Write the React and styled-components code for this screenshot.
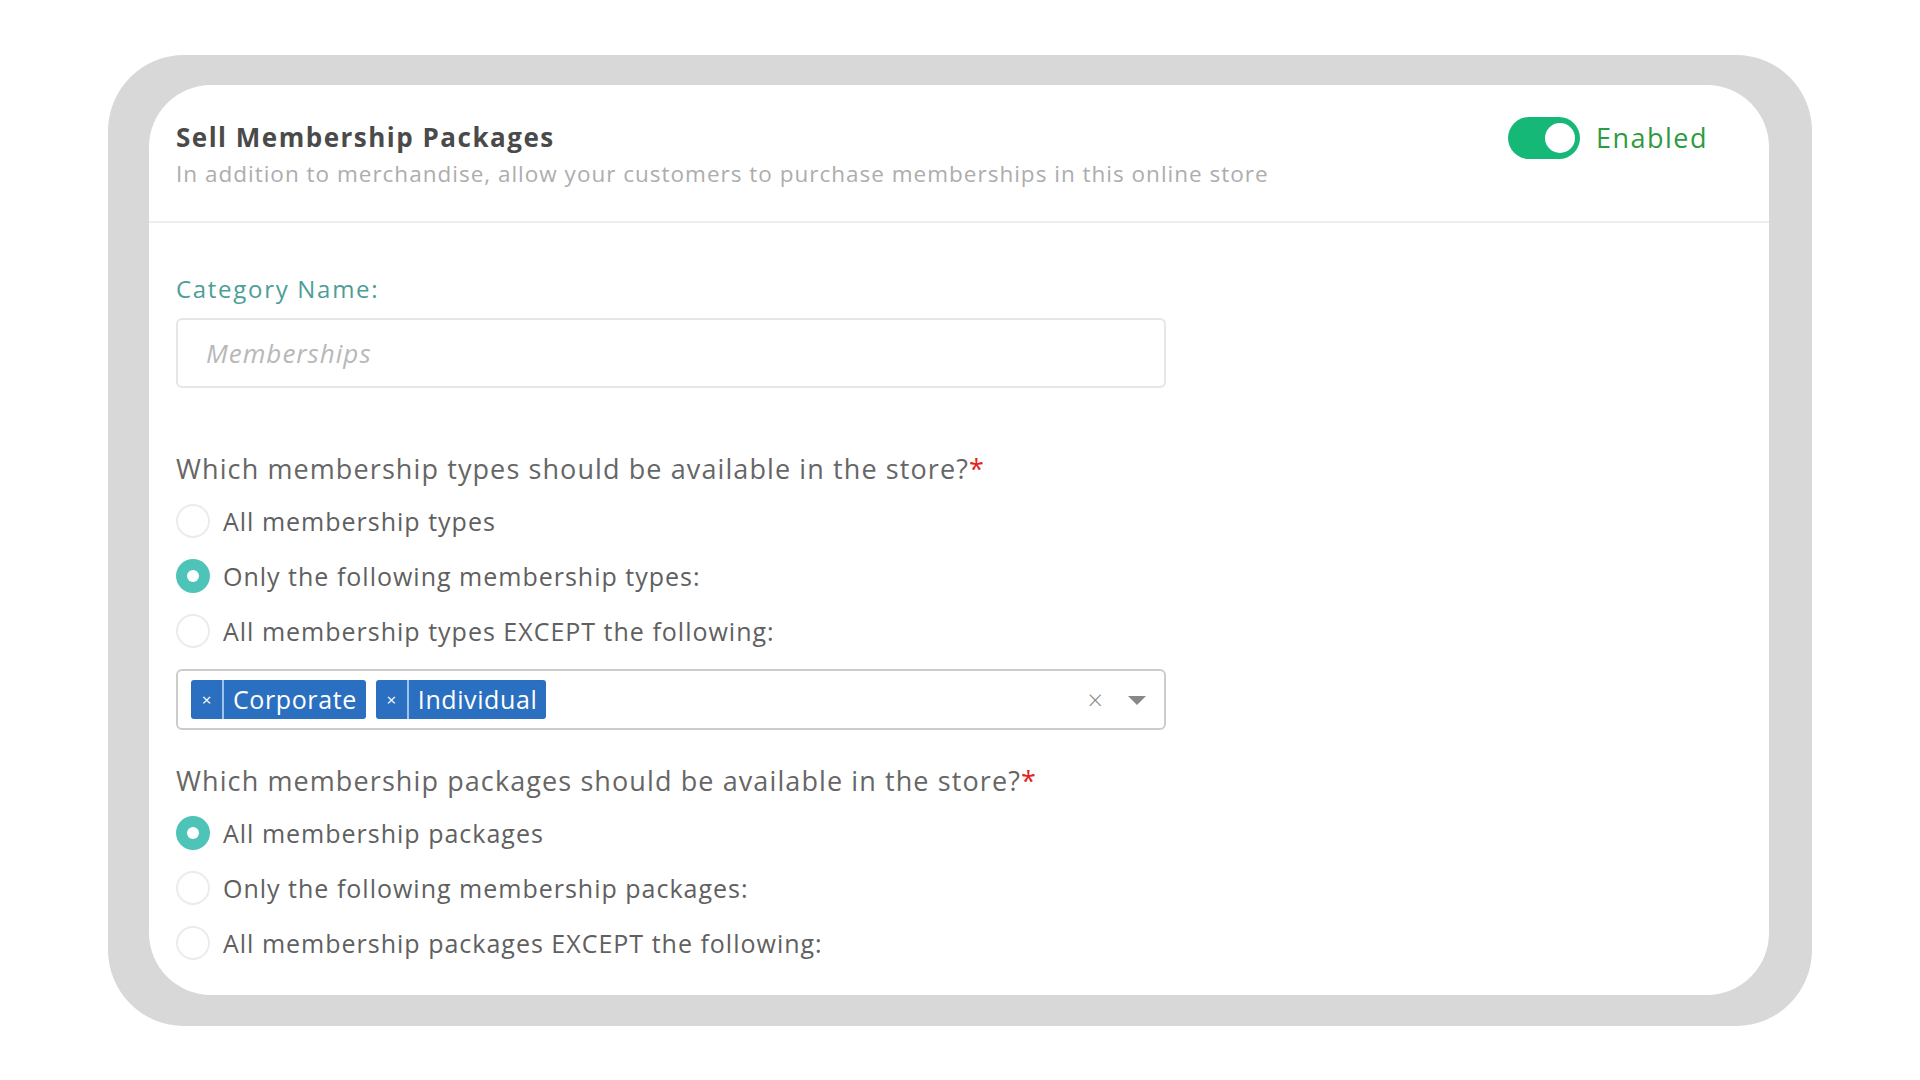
import React, { useState } from 'react'
import styled, { createGlobalStyle } from 'styled-components'

const GlobalStyle = createGlobalStyle`
  * { box-sizing: border-box; }
  body {
    margin: 0;
    background: #ffffff;
    font-family: "Open Sans", "Liberation Sans", sans-serif;
  }
`

const Page = styled.div`
  width: 100vw;
  height: 100vh;
  display: flex;
  align-items: center;
  justify-content: center;
`

const Frame = styled.div`
  width: 1704px;
  height: 971px;
  background: #d8d8d8;
  border-radius: 76px;
  padding: 30px 43px 31px 41px;
`

const Card = styled.div`
  height: 100%;
  background: #ffffff;
  border-radius: 62px;
  overflow: hidden;
`

const Header = styled.div`
  height: 138px;
  display: flex;
  justify-content: space-between;
  align-items: flex-start;
  padding: 32px 61px 0 27px;
  border-bottom: 2px solid #eeeeee;
`

const Title = styled.h2`
  margin: 0;
  font-size: 26px;
  line-height: 40px;
  font-weight: 700;
  letter-spacing: 1.5px;
  color: #4a4a4a;
`

const Subtitle = styled.p`
  margin: 0;
  font-size: 22.5px;
  line-height: 34px;
  letter-spacing: 1px;
  color: #adadad;
`

const ToggleWrap = styled.label`
  display: flex;
  align-items: center;
  gap: 16px;
  cursor: pointer;
`

const Track = styled.span`
  width: 72px;
  height: 42px;
  border-radius: 21px;
  background: ${p => (p.on ? '#16b877' : '#cccccc')};
  display: flex;
  align-items: center;
  justify-content: ${p => (p.on ? 'flex-end' : 'flex-start')};
  padding: 0 5px;
`

const Knob = styled.span`
  width: 30px;
  height: 30px;
  border-radius: 50%;
  background: #ffffff;
`

const ToggleText = styled.span`
  font-size: 27px;
  letter-spacing: 1.5px;
  color: #2e9b3f;
`

const Body = styled.div`
  padding: 49px 0 0 27px;
`

const FieldLabel = styled.div`
  font-size: 24px;
  line-height: 34px;
  letter-spacing: 1.7px;
  color: #4d9e97;
  margin-bottom: 12px;
`

const TextInput = styled.input`
  display: block;
  width: 990px;
  height: 70px;
  border: 2px solid #e6e6e6;
  border-radius: 6px;
  padding: 0 28px;
  font-family: inherit;
  font-size: 26px;
  letter-spacing: 1px;
  color: #555555;
  outline: none;
  &::placeholder {
    color: #b8b8b8;
    font-style: italic;
  }
`

const Question = styled.div`
  font-size: 27px;
  line-height: 34px;
  letter-spacing: 1.1px;
  color: #666666;
  margin: ${p => p.top}px 0 8px;
`

const Req = styled.span`
  color: #e52222;
`

const RadioRow = styled.label`
  height: 55px;
  display: flex;
  align-items: center;
  gap: 13px;
  cursor: pointer;
  font-size: 25px;
  letter-spacing: 1px;
  color: #606060;
`

const RadioDot = styled.span`
  width: 34px;
  height: 34px;
  border-radius: 50%;
  flex: none;
  display: flex;
  align-items: center;
  justify-content: center;
  background: ${p => (p.checked ? '#4ec3b8' : '#ffffff')};
  border: ${p => (p.checked ? 'none' : '2px solid #ececec')};
  &::after {
    content: "";
    width: 12px;
    height: 12px;
    border-radius: 50%;
    background: #ffffff;
    display: ${p => (p.checked ? 'block' : 'none')};
  }
`

const Select = styled.div`
  width: 990px;
  height: 61px;
  margin-top: 10px;
  border: 2px solid #cccccc;
  border-radius: 6px;
  display: flex;
  align-items: center;
  padding: 0 18px 0 13px;
  gap: 10px;
`

const Tag = styled.span`
  height: 39px;
  display: flex;
  align-items: stretch;
  background: #2b6fc0;
  border-radius: 3px;
  color: #ffffff;
`

const TagRemove = styled.span`
  width: 33px;
  display: flex;
  align-items: center;
  justify-content: center;
  font-size: 17px;
  border-right: 2px solid #9cc4ee;
`

const TagText = styled.span`
  display: flex;
  align-items: center;
  padding: 0 9px;
  font-size: 25px;
  letter-spacing: 0.6px;
`

const Spacer = styled.span`
  flex: 1;
`

const ClearBtn = styled.span`
  color: #8a8a8a;
  font-size: 27px;
  font-weight: 300;
  line-height: 1;
  margin-right: 15px;
`

const Caret = styled.span`
  width: 0;
  height: 0;
  border-left: 9px solid transparent;
  border-right: 9px solid transparent;
  border-top: 9px solid #888888;
  margin-top: 3px;
`

const typeOptions = [
  'All membership types',
  'Only the following membership types:',
  'All membership types EXCEPT the following:',
]

const packageOptions = [
  'All membership packages',
  'Only the following membership packages:',
  'All membership packages EXCEPT the following:',
]

function RadioGroup({ options, value, onChange }) {
  return options.map((o, i) => (
    <RadioRow key={o} onClick={() => onChange(i)}>
      <RadioDot checked={value === i} />
      {o}
    </RadioRow>
  ))
}

export default function App() {
  const [enabled, setEnabled] = useState(true)
  const [typeChoice, setTypeChoice] = useState(1)
  const [packageChoice, setPackageChoice] = useState(0)
  const [tags, setTags] = useState(['Corporate', 'Individual'])

  return (
    <Page>
      <GlobalStyle />
      <Frame>
        <Card>
          <Header>
            <div>
              <Title>Sell Membership Packages</Title>
              <Subtitle>
                In addition to merchandise, allow your customers to purchase memberships in this online store
              </Subtitle>
            </div>
            <ToggleWrap onClick={() => setEnabled(!enabled)}>
              <Track on={enabled}>
                <Knob />
              </Track>
              <ToggleText>{enabled ? 'Enabled' : 'Disabled'}</ToggleText>
            </ToggleWrap>
          </Header>
          <Body>
            <FieldLabel>Category Name:</FieldLabel>
            <TextInput placeholder="Memberships" />

            <Question top={64}>
              Which membership types should be available in the store?<Req>*</Req>
            </Question>
            <RadioGroup options={typeOptions} value={typeChoice} onChange={setTypeChoice} />
            <Select>
              {tags.map(t => (
                <Tag key={t}>
                  <TagRemove onClick={() => setTags(tags.filter(x => x !== t))}>×</TagRemove>
                  <TagText>{t}</TagText>
                </Tag>
              ))}
              <Spacer />
              <ClearBtn onClick={() => setTags([])}>×</ClearBtn>
              <Caret />
            </Select>

            <Question top={34}>
              Which membership packages should be available in the store?<Req>*</Req>
            </Question>
            <RadioGroup options={packageOptions} value={packageChoice} onChange={setPackageChoice} />
          </Body>
        </Card>
      </Frame>
    </Page>
  )
}
